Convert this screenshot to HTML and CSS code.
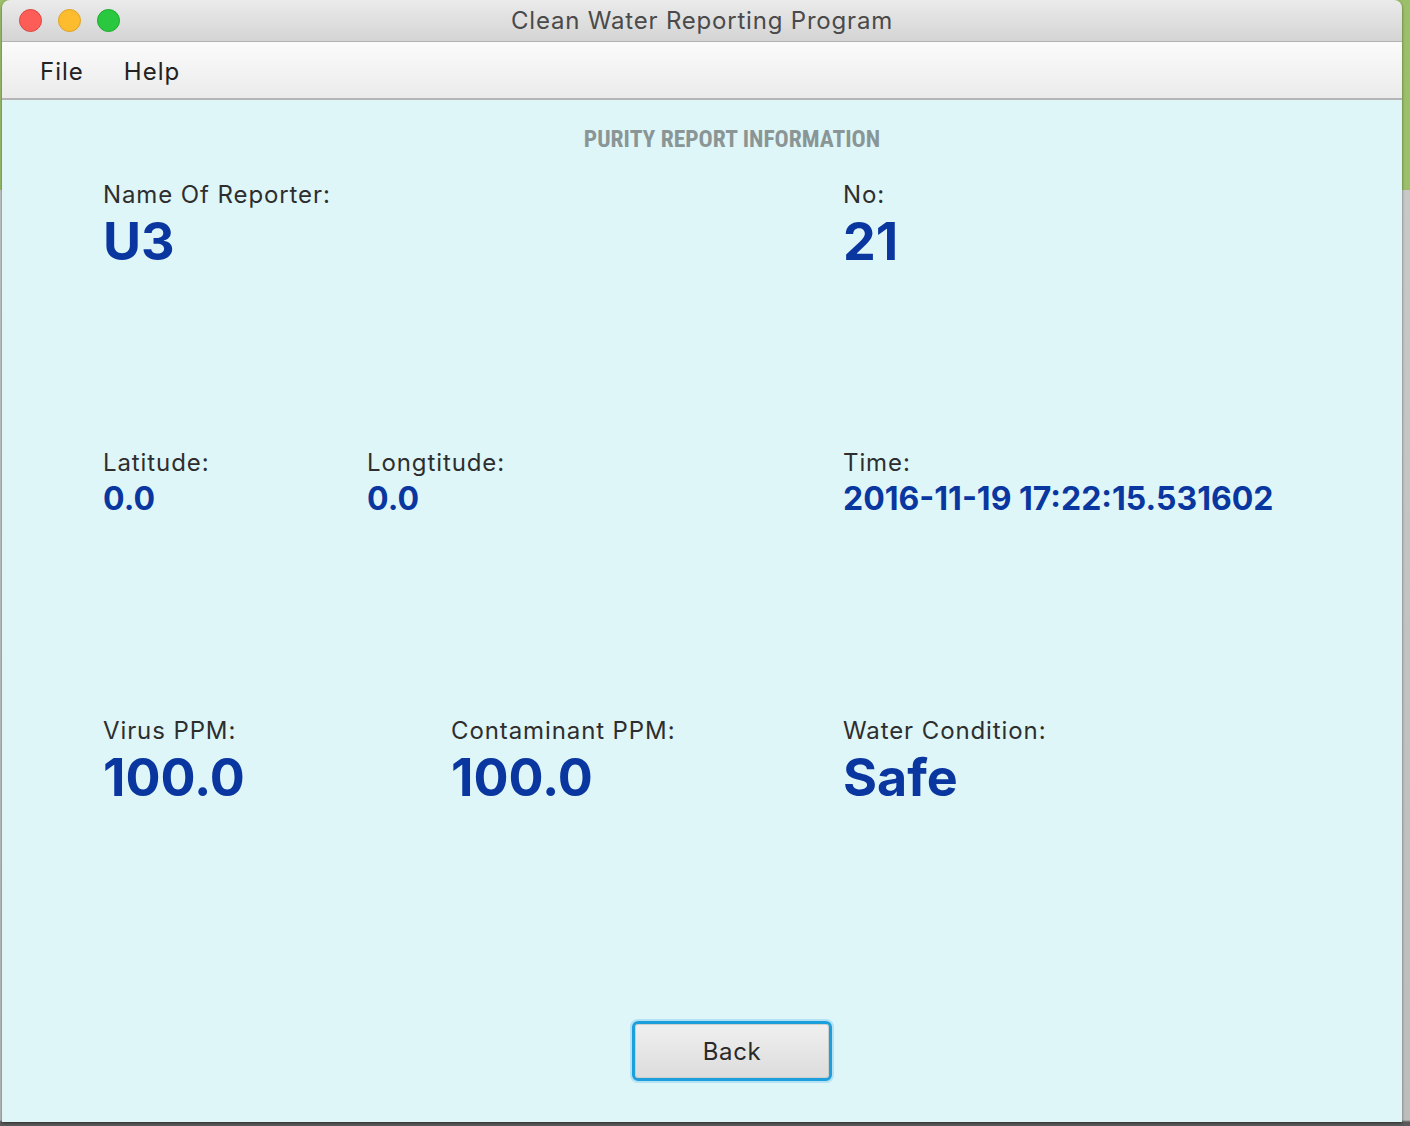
FILE: index.html
```html
<!DOCTYPE html>
<html>
<head>
<meta charset="utf-8">
<title>Clean Water Reporting Program</title>
<link rel="stylesheet" href="styles.css">
</head>
<body>
<div class="window">
  <div class="titlebar">
    <div class="lights">
      <span class="light red"></span>
      <span class="light yellow"></span>
      <span class="light green"></span>
    </div>
    <div class="title">Clean Water Reporting Program</div>
  </div>
  <div class="menubar">
    <span class="menu-item">File</span>
    <span class="menu-item">Help</span>
  </div>
  <div class="content">
    <div class="heading">PURITY REPORT INFORMATION</div>
    <div class="row row1">
      <div class="cell c-name">
        <div class="label">Name Of Reporter:</div>
        <div class="value big">U3</div>
      </div>
      <div class="cell">
        <div class="label">No:</div>
        <div class="value big">21</div>
      </div>
    </div>
    <div class="row row2">
      <div class="cell c-lat">
        <div class="label">Latitude:</div>
        <div class="value mid">0.0</div>
      </div>
      <div class="cell c-long">
        <div class="label">Longtitude:</div>
        <div class="value mid">0.0</div>
      </div>
      <div class="cell">
        <div class="label">Time:</div>
        <div class="value mid">2016-11-19 17:22:15.531602</div>
      </div>
    </div>
    <div class="row row3">
      <div class="cell c-virus">
        <div class="label">Virus PPM:</div>
        <div class="value big">100.0</div>
      </div>
      <div class="cell c-cont">
        <div class="label">Contaminant PPM:</div>
        <div class="value big">100.0</div>
      </div>
      <div class="cell">
        <div class="label">Water Condition:</div>
        <div class="value big">Safe</div>
      </div>
    </div>
    <div class="actions">
      <button class="btn">Back</button>
    </div>
  </div>
</div>
</body>
</html>
```

FILE: styles.css
```css
html, body {
  margin: 0;
  padding: 0;
}
body {
  width: 1410px;
  height: 1126px;
  overflow: hidden;
  background: linear-gradient(180deg, #9cbf6a 0px, #9cbf6a 190px, #c8c8c8 190px, #bdbdbd 1120px, #5a5a5a 1122px);
  font-family: Inter, "Noto Sans", sans-serif;
}
.window {
  margin-left: 2px;
  width: 1400px;
  height: 1122px;
  display: flex;
  flex-direction: column;
  border-radius: 8px 8px 0 0;
  overflow: hidden;
  box-shadow: 0 1px 3px rgba(0,0,0,0.5);
}
.titlebar {
  height: 41px;
  flex: none;
  display: flex;
  align-items: center;
  position: relative;
  background: linear-gradient(180deg, #ebebeb, #d4d4d4);
  border-bottom: 1px solid #b3b3b3;
}
.lights {
  display: flex;
  gap: 16px;
  padding-left: 17px;
}
.light {
  width: 23px;
  height: 23px;
  border-radius: 50%;
  box-sizing: border-box;
}
.red { background: #fc5e57; border: 1px solid #e0443e; }
.yellow { background: #fdbc2e; border: 1px solid #dea123; }
.green { background: #29c83f; border: 1px solid #1aab29; }
.title {
  position: absolute;
  left: 0;
  right: 0;
  text-align: center;
  font-size: 24px;
  letter-spacing: 0.8px;
  color: #4a4a4a;
  line-height: 41px;
}
.menubar {
  height: 56px;
  flex: none;
  display: flex;
  align-items: center;
  gap: 40px;
  padding-left: 38px;
  background: linear-gradient(180deg, #fbfbfb, #ebebeb);
  border-bottom: 2px solid #b5b5b5;
}
.menu-item {
  font-size: 24px;
  letter-spacing: 1px;
  color: #222;
  padding-top: 2px;
}
.content {
  flex: 1;
  background: #dff6f9;
  display: flex;
  flex-direction: column;
  padding-left: 101px;
}
.heading {
  margin-top: 24px;
  margin-left: -41px;
  text-align: center;
  font-family: "Liberation Sans Narrow", "Roboto Condensed", Roboto, sans-serif;
  font-stretch: condensed;
  font-weight: 700;
  font-size: 23.5px;
  line-height: 30px;
  color: #8a9595;
}
.row {
  display: flex;
}
.row1 { margin-top: 26px; }
.row2 { margin-top: 176px; }
.row3 { margin-top: 197px; }
.c-name { width: 740px; }
.c-lat { width: 264px; }
.c-long { width: 476px; }
.c-virus { width: 348px; }
.c-cont { width: 392px; }
.label {
  font-size: 24px;
  letter-spacing: 0.9px;
  line-height: 30px;
  color: #2e2e2e;
}
.value {
  color: #0a36a0;
  font-weight: 700;
}
.big {
  font-size: 52px;
  line-height: 60px;
  margin-top: 2px;
}
.mid {
  font-size: 32px;
  line-height: 40px;
  margin-top: 1px;
}
.actions {
  margin-top: auto;
  margin-bottom: 41px;
  display: flex;
  justify-content: center;
  margin-left: -41px;
}
.btn {
  width: 200px;
  height: 60px;
  border: 3px solid #1d9fdc;
  border-radius: 6px;
  background: linear-gradient(180deg, #f0f0f0, #dcdcdc);
  box-shadow: inset 0 0 0 1px #cfcfcf, 0 0 0 2px rgba(100,190,235,0.35);
  font-family: Inter, "Noto Sans", sans-serif;
  font-size: 24px;
  letter-spacing: 0.6px;
  color: #2a2a2a;
  padding: 0;
}
```
